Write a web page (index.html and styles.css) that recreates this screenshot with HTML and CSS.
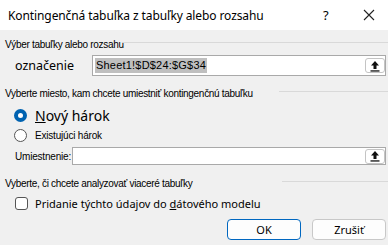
FILE: index.html
```html
<!DOCTYPE html>
<html>
<head>
<meta charset="utf-8">
<link rel="stylesheet" href="styles.css">
</head>
<body>
<div class="dialog">
  <div class="titlebar">
    <span class="title">Kontingenčná tabuľka z tabuľky alebo rozsahu</span>
    <span class="help">?</span>
    <svg class="close" width="12" height="12" viewBox="0 0 12 12"><path d="M1 1L11 11M11 1L1 11" stroke="#222" stroke-width="1.1"/></svg>
  </div>
  <div class="content">
    <div class="legend legend-1"><span class="legend-text">Výber tabuľky alebo rozsahu</span><i class="rule"></i></div>
    <div class="field-row row-range">
      <span class="label-mid">označenie</span>
      <div class="input input-range">
        <span class="sel">Sheet1!$D$24:$G$34</span>
        <span class="collapse"><svg width="10" height="12" viewBox="0 0 10 12"><path d="M5 1L1 5.5H3.5V9H6.5V5.5H9Z" fill="#111"/><rect x="0.5" y="10.3" width="9" height="1.3" fill="#111"/></svg></span>
      </div>
    </div>
    <div class="legend legend-2"><span class="legend-text">Vyberte miesto, kam chcete umiestniť kontingenčnú tabuľku</span><i class="rule"></i></div>
    <div class="radio-row row-new">
      <span class="radio on"></span>
      <span class="label-big"><u>N</u>ový hárok</span>
    </div>
    <div class="radio-row row-exist">
      <span class="radio"></span>
      <span class="label-small">Existujúci hárok</span>
    </div>
    <div class="field-row row-loc">
      <span class="label-small loc-label">Umiestnenie:</span>
      <div class="input input-loc">
        <span class="collapse"><svg width="10" height="12" viewBox="0 0 10 12"><path d="M5 1L1 5.5H3.5V9H6.5V5.5H9Z" fill="#111"/><rect x="0.5" y="10.3" width="9" height="1.3" fill="#111"/></svg></span>
      </div>
    </div>
    <div class="legend legend-3"><span class="legend-text">Vyberte, či chcete analyzovať viaceré tabuľky</span><i class="rule"></i></div>
    <div class="check-row">
      <span class="checkbox"></span>
      <span class="label-check">Pridanie týchto údajov do <u>d</u>átového modelu</span>
    </div>
    <div class="buttons">
      <button class="btn primary">OK</button>
      <button class="btn">Zrušiť</button>
    </div>
  </div>
</div>
</body>
</html>
```
FILE: styles.css
```css
html, body {
  margin: 0;
  padding: 0;
}
body {
  width: 388px;
  height: 245px;
  overflow: hidden;
  background: #f0f0f0;
  font-family: "Noto Sans", "Open Sans", sans-serif;
  color: #000;
}
.dialog {
  width: 388px;
  height: 245px;
  display: flex;
  flex-direction: column;
}
.titlebar {
  height: 30px;
  flex: none;
  background: #fff;
  display: flex;
  align-items: center;
  padding-left: 8px;
  font-size: 12px;
}
.title {
  flex: 1;
  letter-spacing: -0.1px;
}
.help {
  font-size: 13px;
  width: 12px;
  margin-right: 28px;
}
.close {
  margin-right: 13px;
}
.content {
  flex: 1;
  padding: 7px 0 0 5px;
  display: flex;
  flex-direction: column;
}
.legend {
  height: 14px;
  display: flex;
  align-items: center;
  font-family: "Liberation Sans", Arial, sans-serif;
  font-size: 10px;
  letter-spacing: -0.3px;
  color: #000;
}
.legend-text {
  flex: none;
  white-space: nowrap;
}
.legend-1 .legend-text { width: 117px; }
.legend-2 .legend-text { width: 274px; }
.legend-3 .legend-text { width: 277px; }
.legend .rule {
  flex: 1;
  height: 0;
  border-top: 1px solid #d9d9d9;
  margin-top: -3px;
}
.field-row {
  display: flex;
  align-items: center;
}
.row-range {
  margin-top: 4px;
  height: 21px;
}
.label-mid {
  font-size: 12.5px;
}
.label-big {
  font-size: 14px;
}
.label-small {
  font-family: "Liberation Sans", Arial, sans-serif;
  font-size: 10px;
  letter-spacing: -0.2px;
}
.label-check {
  font-size: 11px;
}
.row-range .label-mid {
  width: 77px;
  padding-left: 10px;
  flex: none;
}
.input {
  flex: 1;
  height: 100%;
  box-sizing: border-box;
  background: #fff;
  border: 1px solid #a9a9a9;
  display: flex;
  align-items: center;
  padding-left: 2px;
}
.input-range {
  margin-right: 2px;
}
.sel {
  background: #bfbfbf;
  font-family: "Liberation Sans", Arial, sans-serif;
  font-size: 11px;
  letter-spacing: 0.2px;
  line-height: 15px;
  padding: 0 1px;
}
.collapse {
  margin-left: auto;
  margin-right: 0;
  width: 20px;
  height: 15px;
  box-sizing: border-box;
  border: 1px solid #c4c4c4;
  border-radius: 3px;
  background: #fff;
  display: flex;
  align-items: center;
  justify-content: center;
}
.legend-2 {
  margin-top: 10px;
}
.radio-row {
  display: flex;
  align-items: center;
  padding-left: 9px;
}
.row-new {
  margin-top: 6px;
  height: 19px;
}
.row-exist {
  height: 19px;
  margin-top: 1px;
}
.radio {
  width: 13px;
  height: 13px;
  box-sizing: border-box;
  border-radius: 50%;
  border: 1px solid #555;
  background: #fff;
  margin-right: 8px;
}
.radio.on {
  border: 4px solid #0063b1;
  background: #fff;
}
.row-loc {
  margin-top: 2px;
  height: 18px;
}
.loc-label {
  width: 57px;
  padding-left: 10px;
  flex: none;
}
.input-loc {
  margin-right: 2px;
}
.legend-3 {
  margin-top: 11px;
}
.check-row {
  display: flex;
  align-items: center;
  padding-left: 10px;
  height: 18px;
  margin-top: 4px;
}
.checkbox {
  width: 13px;
  height: 13px;
  box-sizing: border-box;
  border: 1px solid #555;
  border-radius: 3px;
  background: #fff;
  margin-right: 7px;
}
.buttons {
  display: flex;
  justify-content: flex-end;
  gap: 11px;
  margin-top: 7px;
  padding-right: 2px;
}
.btn {
  width: 74px;
  height: 21px;
  box-sizing: border-box;
  border: 1px solid #c8c8c8;
  border-radius: 4px;
  background: #fdfdfd;
  font-family: "Noto Sans", sans-serif;
  font-size: 11px;
  padding: 0;
  color: #000;
}
.btn.primary {
  border-color: #0067c0;
}
```
